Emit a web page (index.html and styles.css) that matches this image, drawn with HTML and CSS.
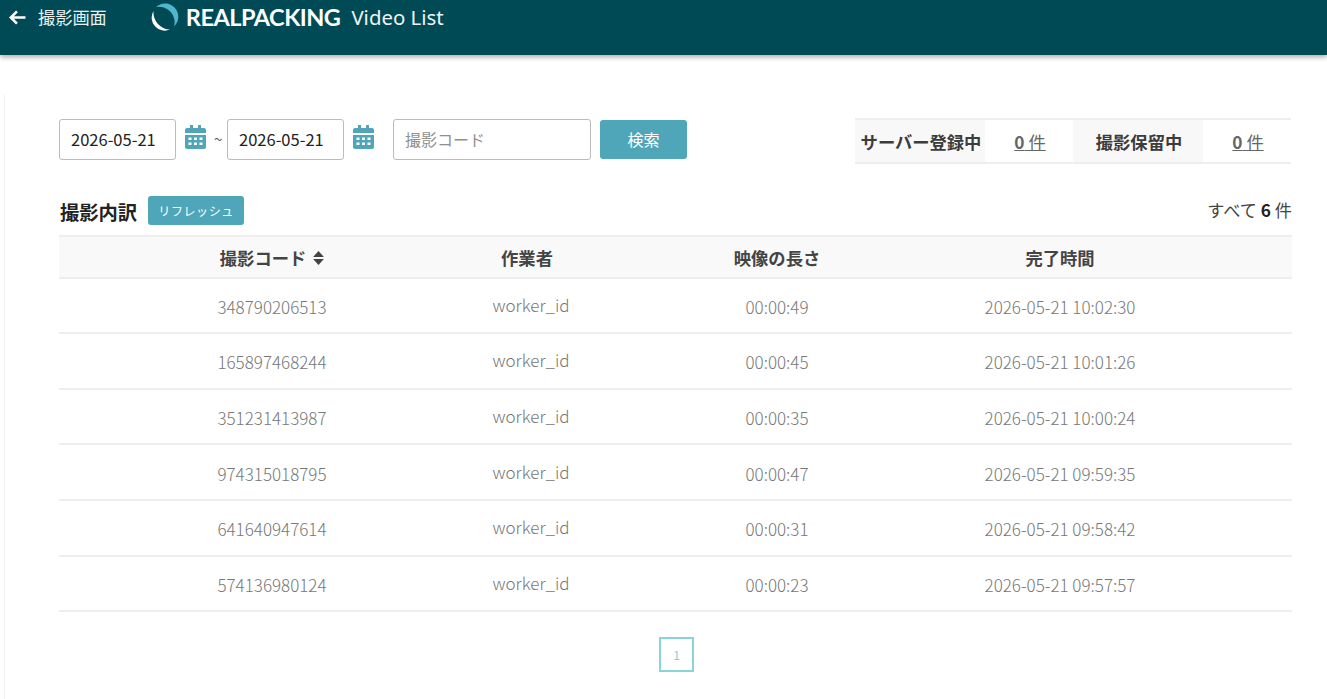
FILE: index.html
```html
<!DOCTYPE html>
<html lang="ja">
<head>
<meta charset="utf-8">
<title>Video List</title>
<link rel="stylesheet" href="styles.css">
</head>
<body>
<header class="topbar">
  <a class="back">
    <svg class="back-icon" viewBox="0 0 16 14"><path d="M7.500 1.200 1.700 7l5.800 5.800M2.500 7H15.500" fill="none" stroke="#fff" stroke-width="2.400"/></svg>
    <span>撮影画面</span>
  </a>
  <div class="brand">
    <svg class="logo" viewBox="0 0 28 28">
      <path d="M5 4A13 13 0 0 1 23 23.500A15.500 15.500 0 0 0 5 4Z" fill="#4fb6cc"/>
      <path d="M2.500 8A13 13 0 0 0 19 26.500A17 17 0 0 1 2.500 8Z" fill="#fff"/>
    </svg>
    <span class="wordmark">REALPACKING</span>
    <span class="page-title">Video List</span>
  </div>
</header>
<main class="page">
  <div class="toolbar">
    <form class="search">
      <input class="field date" value="2026-05-21">
      <svg class="cal" viewBox="0 0 21 24"><path d="M5 0h3v3h5V0h3v3h3a2 2 0 0 1 2 2v3H0V5a2 2 0 0 1 2-2h3ZM0 10h21v12a2 2 0 0 1-2 2H2a2 2 0 0 1-2-2Zm3.500 2.500v2.500h3v-2.500Zm5.500 0v2.500h3v-2.500Zm5.500 0v2.500h3v-2.500Zm-11 5v2.500h3v-2.500Zm5.500 0v2.500h3v-2.500Zm5.500 0v2.500h3v-2.500Z" fill="#4fa6b9" fill-rule="evenodd"/></svg>
      <span class="tilde">~</span>
      <input class="field date" value="2026-05-21">
      <svg class="cal" viewBox="0 0 21 24"><path d="M5 0h3v3h5V0h3v3h3a2 2 0 0 1 2 2v3H0V5a2 2 0 0 1 2-2h3ZM0 10h21v12a2 2 0 0 1-2 2H2a2 2 0 0 1-2-2Zm3.500 2.500v2.500h3v-2.500Zm5.500 0v2.500h3v-2.500Zm5.500 0v2.500h3v-2.500Zm-11 5v2.500h3v-2.500Zm5.500 0v2.500h3v-2.500Zm5.500 0v2.500h3v-2.500Z" fill="#4fa6b9" fill-rule="evenodd"/></svg>
      <input class="field code" placeholder="撮影コード">
      <button class="search-btn" type="button">検索</button>
    </form>
    <div class="status">
      <div class="status-label">サーバー登録中</div>
      <div class="status-value"><a><b>0</b> 件</a></div>
      <div class="status-label">撮影保留中</div>
      <div class="status-value"><a><b>0</b> 件</a></div>
    </div>
  </div>

  <div class="list-head">
    <div class="list-title">
      <h2>撮影内訳</h2>
      <button class="refresh" type="button">リフレッシュ</button>
    </div>
    <div class="total">すべて <b>6</b> 件</div>
  </div>

  <div class="table">
    <div class="row head">
      <div class="cell">撮影コード <svg class="sort" viewBox="0 0 10 13"><path d="M5 0l5 5.500H0ZM5 13l5-5.500H0Z" fill="#444"/></svg></div>
      <div class="cell">作業者</div>
      <div class="cell">映像の長さ</div>
      <div class="cell">完了時間</div>
    </div>
    <div class="row"><div class="cell">348790206513</div><div class="cell worker">worker_id</div><div class="cell">00:00:49</div><div class="cell">2026-05-21 10:02:30</div></div>
    <div class="row"><div class="cell">165897468244</div><div class="cell worker">worker_id</div><div class="cell">00:00:45</div><div class="cell">2026-05-21 10:01:26</div></div>
    <div class="row"><div class="cell">351231413987</div><div class="cell worker">worker_id</div><div class="cell">00:00:35</div><div class="cell">2026-05-21 10:00:24</div></div>
    <div class="row"><div class="cell">974315018795</div><div class="cell worker">worker_id</div><div class="cell">00:00:47</div><div class="cell">2026-05-21 09:59:35</div></div>
    <div class="row"><div class="cell">641640947614</div><div class="cell worker">worker_id</div><div class="cell">00:00:31</div><div class="cell">2026-05-21 09:58:42</div></div>
    <div class="row"><div class="cell">574136980124</div><div class="cell worker">worker_id</div><div class="cell">00:00:23</div><div class="cell">2026-05-21 09:57:57</div></div>
  </div>

  <nav class="pager"><a class="page-num">1</a></nav>
</main>
</body>
</html>
```
FILE: styles.css
```css
* { box-sizing: border-box; }
html, body { margin: 0; height: 100%; overflow: hidden; }
body {
  background: #fff;
  color: #222;
  font-family: "Noto Sans CJK JP", "Noto Sans", sans-serif;
  font-size: 16px;
}

.topbar {
  height: 55px;
  background: #004a55;
  box-shadow: 0 2px 5px rgba(0, 0, 0, .35);
  color: #fff;
  display: flex;
  align-items: flex-start;
  padding: 3px 0 0 9px;
}
.back {
  display: flex;
  align-items: center;
  gap: 12px;
  font-size: 17.200px;
  line-height: 28px;
  color: #e8f0f1;
}
.back-icon { width: 17px; height: 15px; }
.brand {
  display: flex;
  align-items: center;
  margin-left: 44px;
  height: 28px;
}
.logo { width: 28px; height: 28px; flex: none; }
.wordmark {
  font-family: "Lato", sans-serif;
  font-weight: 700;
  font-size: 23.500px;
  letter-spacing: -.5px;
  margin-left: 7px;
}
.page-title {
  font-family: "Noto Sans", sans-serif;
  font-size: 20.400px;
  margin-left: 11px;
  color: #eef4f5;
}

.page {
  margin: 39px 35px 0 4px;
  border-left: 1px solid #f3f3f3;
  padding: 25px 0 0 54px;
  height: 605px;
}

.toolbar {
  display: flex;
  justify-content: space-between;
  align-items: flex-start;
}
.search { display: flex; align-items: center; height: 41px; }
.field {
  height: 41px;
  border: 1px solid #bbb;
  border-radius: 3px;
  padding: 0 11px 2px;
  font: 16px "Noto Sans CJK JP", sans-serif;
  color: #222;
  background: #fff;
  outline: 0;
}
.field::placeholder { color: #8f8f8f; opacity: 1; }
.date { width: 117px; font-size: 16.500px; }
.code { width: 198px; margin-left: 19px; }
.cal { width: 21px; height: 24px; margin: -5px 0 0 9px; flex: none; }
.tilde { width: 21px; padding-left: 8px; font-size: 15px; color: #555; margin-top: -3px; }
.search-btn {
  width: 87px;
  height: 39px;
  margin-left: 9px;
  padding: 0 0 2px;
  background: #4fa6b9;
  color: #fff;
  border: 0;
  border-radius: 3px;
  font: 16px "Noto Sans CJK JP", sans-serif;
}

.status {
  display: grid;
  grid-template-columns: 130px 88px 130px 88px;
  width: 436px;
  height: 46px;
  margin: -1px 1px 0 0;
  border-top: 2px solid #eee;
  border-bottom: 2px solid #eee;
  font-size: 17.300px;
}
.status > div { display: flex; align-items: center; justify-content: center; padding-left: 2px; }
.status-label { background: #f8f8f8; font-weight: 700; color: #3c3c3c; white-space: nowrap; }
.status-value a { text-decoration: underline; color: #666; }

.list-head {
  display: flex;
  justify-content: space-between;
  align-items: center;
  margin-top: 31px;
  height: 30px;
}
.list-title { display: flex; align-items: center; gap: 11px; }
.list-title h2 { margin: 3px 0 0 1px; font-size: 19.300px; font-weight: 700; color: #222; }
.refresh {
  width: 96px;
  height: 29px;
  background: #4fa6b9;
  color: #fff;
  border: 0;
  border-radius: 3px;
  font: 12px "Noto Sans CJK JP", sans-serif;
  letter-spacing: .6px;
  padding: 0;
}
.total { font-size: 17.200px; color: #444; margin-top: -2px; }
.total b { color: #222; }

.table { margin-top: 10px; height: 376px; }
.row {
  display: grid;
  grid-template-columns: 84px 258px 260px 232px 334px 1fr;
  height: 55.670px;
  border-bottom: 2px solid #eee;
  align-items: center;
  font-size: 17px;
  font-weight: 300;
  color: #777;
}
.cell { text-align: center; white-space: nowrap; margin-top: 2px; }
.cell:first-child { grid-column: 2; }
.row.head {
  height: 43.500px;
  background: #f9f9f9;
  border-top: 2px solid #eee;
  font-size: 17.300px;
  font-weight: 700;
  color: #444;
}
.head .cell:nth-child(2) { padding-right: 8px; }
.worker { margin-top: -2px; }
.sort { width: 11px; height: 14px; margin-left: 3px; }

.pager { display: flex; justify-content: center; margin: 26px 0 0 2px; }
.page-num {
  width: 35px;
  height: 35px;
  border: 2px solid #8ad4d8;
  color: #86d0d4;
  font-size: 12px;
  display: flex;
  align-items: center;
  justify-content: center;
}
```
